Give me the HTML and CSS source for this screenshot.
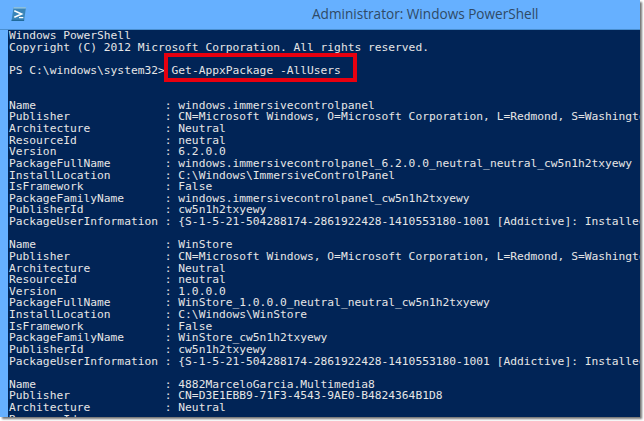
FILE: index.html
```html
<!DOCTYPE html>
<html lang="en">
<head>
<meta charset="utf-8">
<title>Administrator: Windows PowerShell</title>
<link rel="stylesheet" href="styles.css">
</head>
<body>
<div class="window">
  <header class="titlebar">
    <svg class="ps-icon" width="16" height="16" viewBox="0 0 16 16" aria-hidden="true">
      <path d="M2.5 1.2H15L13 15H.5Z" fill="#3a85b8"/>
      <path d="M2.5 1.2H15L14.8 2.6H2.3Z" fill="#a4d0e6"/>
      <path d="M.5 15H13L13.2 13.8H.7Z" fill="#1f6a9c"/>
      <path d="M3.3 4.7 10.7 8 3.3 11.3" fill="none" stroke="#fff" stroke-width="1.5"/>
      <path d="M8 11.6H12.3" stroke="#fff" stroke-width="1.2"/>
    </svg>
    <div class="title">Administrator: Windows PowerShell</div>
  </header>
  <main class="console">
    <div class="pane">
<pre class="out">Windows PowerShell
Copyright (C) 2012 Microsoft Corporation. All rights reserved.

PS C:\windows\system32&gt; <span class="cmd">Get-AppxPackage -AllUsers</span>


Name                   : windows.immersivecontrolpanel
Publisher              : CN=Microsoft Windows, O=Microsoft Corporation, L=Redmond, S=Washington, C=US
Architecture           : Neutral
ResourceId             : neutral
Version                : 6.2.0.0
PackageFullName        : windows.immersivecontrolpanel_6.2.0.0_neutral_neutral_cw5n1h2txyewy
InstallLocation        : C:\Windows\ImmersiveControlPanel
IsFramework            : False
PackageFamilyName      : windows.immersivecontrolpanel_cw5n1h2txyewy
PublisherId            : cw5n1h2txyewy
PackageUserInformation : {S-1-5-21-504288174-2861922428-1410553180-1001 [Addictive]: Installed}

Name                   : WinStore
Publisher              : CN=Microsoft Windows, O=Microsoft Corporation, L=Redmond, S=Washington, C=US
Architecture           : Neutral
ResourceId             : neutral
Version                : 1.0.0.0
PackageFullName        : WinStore_1.0.0.0_neutral_neutral_cw5n1h2txyewy
InstallLocation        : C:\Windows\WinStore
IsFramework            : False
PackageFamilyName      : WinStore_cw5n1h2txyewy
PublisherId            : cw5n1h2txyewy
PackageUserInformation : {S-1-5-21-504288174-2861922428-1410553180-1001 [Addictive]: Installed}

Name                   : 4882MarceloGarcia.Multimedia8
Publisher              : CN=D3E1EBB9-71F3-4543-9AE0-B4824364B1D8
Architecture           : Neutral
ResourceId             :</pre>
    </div>
  </main>
</div>
</body>
</html>
```
FILE: styles.css
```css
html, body {
  margin: 0;
  padding: 0;
  background: #fff;
}
body {
  width: 644px;
  height: 421px;
  overflow: hidden;
}
.window {
  width: 640px;
  height: 417px;
  background: #66b0ff;
  box-shadow: 2px 2px 2px rgba(0, 0, 0, .55);
  display: flex;
  flex-direction: column;
  overflow: hidden;
}
.titlebar {
  height: 27px;
  flex: none;
  display: flex;
  align-items: center;
  padding: 0 0 2px 11px;
  border-bottom: 1px solid #4a8fd0;
}
.ps-icon {
  flex: none;
}
.title {
  flex: 1;
  font: 13.6px/18px "Open Sans", "Noto Sans", sans-serif;
  color: #2f4a66;
  padding-left: 285px;
  white-space: nowrap;
}
.console {
  flex: 1;
  min-height: 0;
  padding-left: 8px;
  overflow: hidden;
}
.pane {
  height: 100%;
  background: #012456;
  overflow: hidden;
  padding: 0 0 0 1px;
}
.out {
  margin: 0;
  font: 11.26px/11.63px "DejaVu Sans Mono", "Liberation Mono", monospace;
  color: #e6e6e6;
  white-space: pre;
}
.cmd {
  position: relative;
}
.cmd::after {
  content: "";
  position: absolute;
  left: -8px;
  right: -16px;
  top: -11px;
  height: 21px;
  border: 4px solid #e8000f;
}
```
